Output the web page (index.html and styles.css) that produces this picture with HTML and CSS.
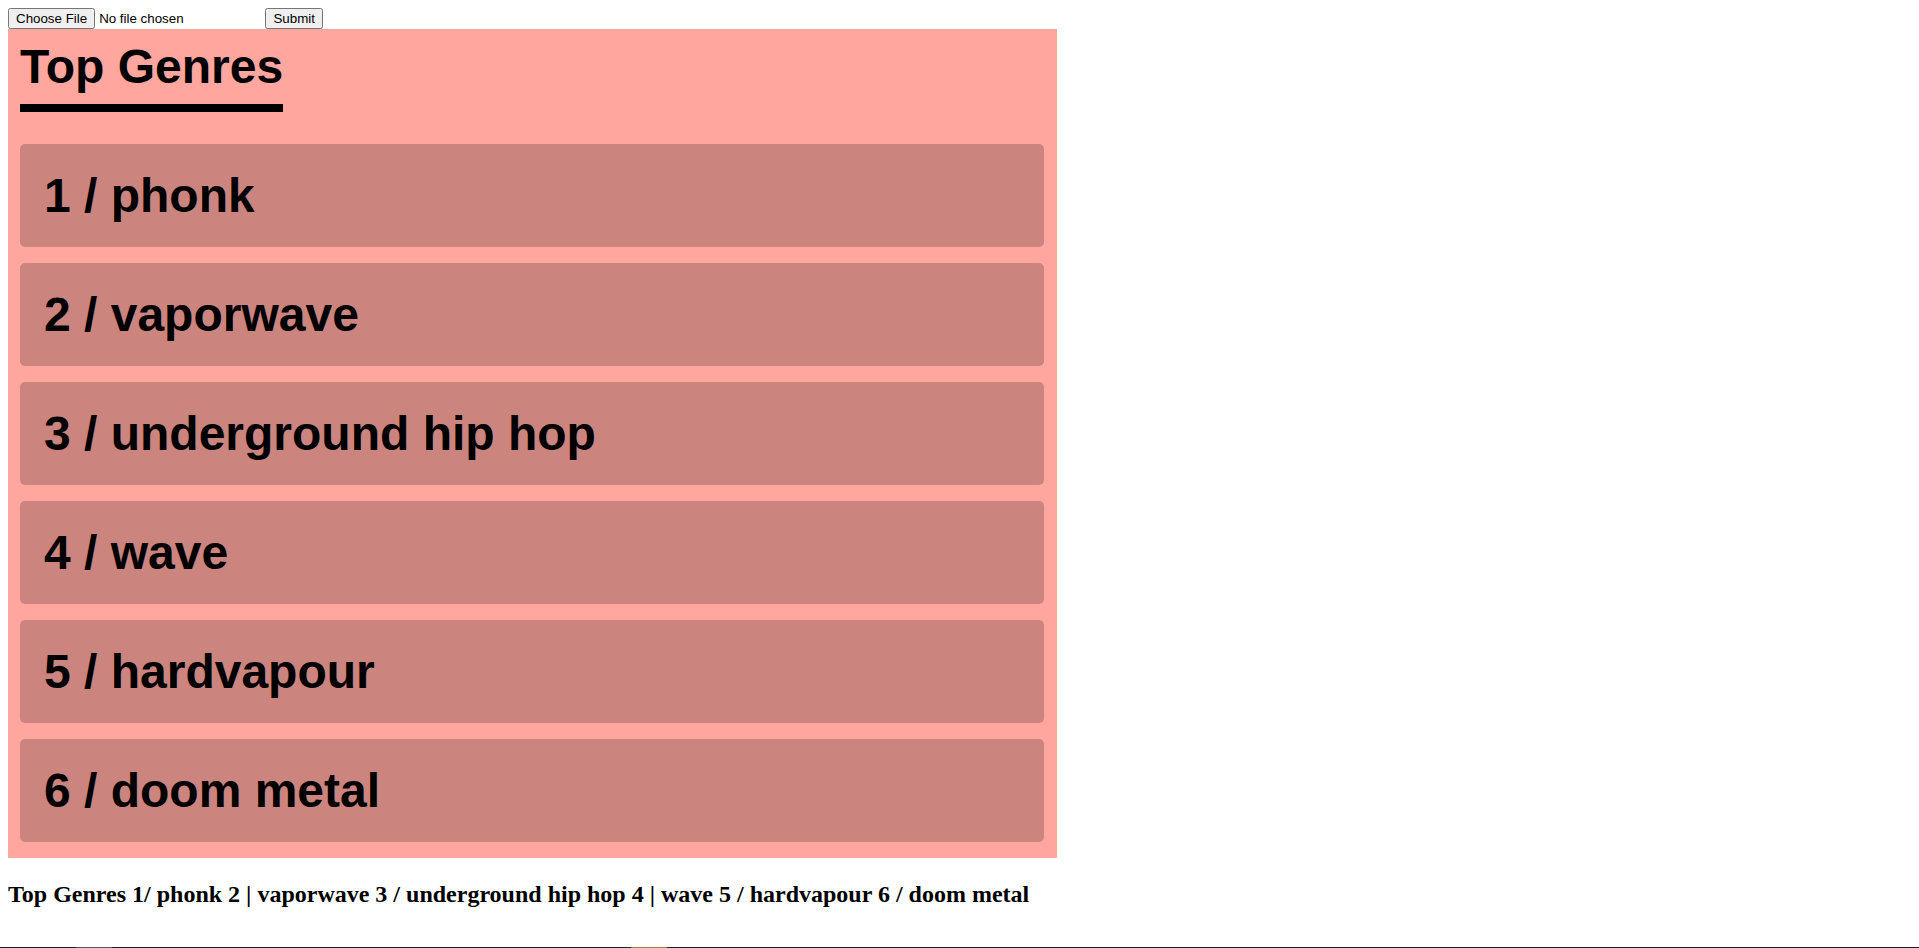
FILE: index.html
```html
<!DOCTYPE html>
<html>
<head>
<meta charset="utf-8">
<title>Top Genres</title>
<link rel="stylesheet" href="styles.css">
</head>
<body>
<form class="upload">
<input type="file" name="file"> <input type="submit" value="Submit">
</form>
<section class="panel">
<h1 class="title">Top Genres</h1>
<ol class="genres">
<li class="genre">1 / phonk</li>
<li class="genre">2 / vaporwave</li>
<li class="genre">3 / underground hip hop</li>
<li class="genre">4 / wave</li>
<li class="genre">5 / hardvapour</li>
<li class="genre">6 / doom metal</li>
</ol>
</section>
<h2 class="summary">Top Genres 1/ phonk 2 | vaporwave 3 / underground hip hop 4 | wave 5 / hardvapour 6 / doom metal</h2>
<div class="taskbar"><span class="tb-gray"></span><span class="tb-orange"></span></div>
</body>
</html>
```
FILE: styles.css
```css
body {
  margin: 8px;
  font-family: "Liberation Serif", "Times New Roman", serif;
  background: #ffffff;
  color: #000000;
}
.upload {
  margin: 0;
  height: 21px;
  font-family: "Liberation Sans", Arial, sans-serif;
}
.panel {
  width: 1049px;
  box-sizing: border-box;
  background: #ffa69e;
  padding: 10px 13px 16px 12px;
  font-family: "Liberation Sans", Arial, sans-serif;
}
.title {
  display: inline-block;
  margin: 0;
  font-size: 48px;
  font-weight: bold;
  padding-bottom: 10px;
  border-bottom: 8px solid #000000;
}
.genres {
  list-style: none;
  margin: 32px 0 0 0;
  padding: 0;
  display: flex;
  flex-direction: column;
  gap: 16px;
}
.genre {
  background: rgba(0, 0, 0, 0.2);
  border-radius: 5px;
  padding: 24px 24px;
  font-size: 48px;
  font-weight: bold;
  line-height: normal;
}
.summary {
  margin: 23px 0 0 0;
  font-size: 24px;
  font-weight: bold;
}
.taskbar {
  position: fixed;
  left: 0;
  right: 0;
  bottom: 0;
  height: 1px;
  background: #202020;
}
.tb-gray {
  position: absolute;
  left: 76px;
  width: 36px;
  height: 1px;
  background: #555555;
}
.tb-orange {
  position: absolute;
  left: 631px;
  width: 36px;
  height: 1px;
  background: #b07a45;
}
```
